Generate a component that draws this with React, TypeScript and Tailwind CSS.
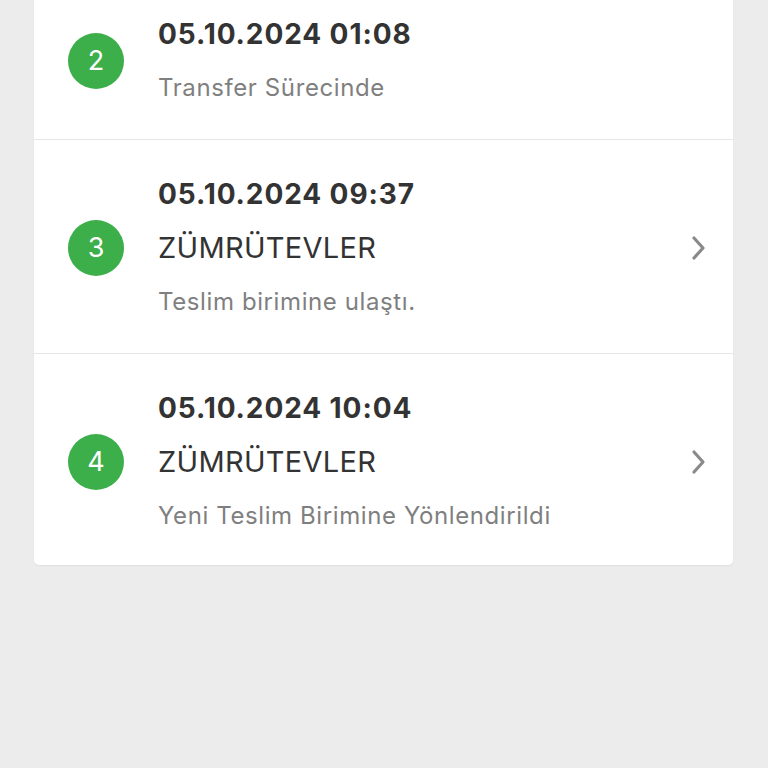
import React from "react";

type Item = { n: number; date: string; place?: string; status: string };

const items: Item[] = [
  { n: 2, date: "05.10.2024 01:08", status: "Transfer Sürecinde" },
  { n: 3, date: "05.10.2024 09:37", place: "ZÜMRÜTEVLER", status: "Teslim birimine ulaştı." },
  { n: 4, date: "05.10.2024 10:04", place: "ZÜMRÜTEVLER", status: "Yeni Teslim Birimine Yönlendirildi" },
];

function Chevron() {
  return (
    <svg width="18" height="26" viewBox="0 0 18 26" fill="none">
      <path d="M4 3 L13 13 L4 23" stroke="#8a8a8a" strokeWidth="3.2" strokeLinecap="round" strokeLinejoin="round" />
    </svg>
  );
}

export default function App() {
  return (
    <div className="min-h-[768px] w-full bg-[#ececec] overflow-hidden" style={{ fontFamily: "Inter, 'Noto Sans', sans-serif" }}>
      <div className="ml-[34px] mr-[35px] -mt-[20px] bg-white rounded-b-[5px] shadow-[0_1px_2px_rgba(0,0,0,0.06)]">
        {items.map((it, i) => (
          <div
            key={it.n}
            className={`flex items-center pl-[34px] pr-[25px] pt-[27px] ${i === items.length - 1 ? "pb-[22px]" : "pb-[24px]"} ${i > 0 ? "border-t border-[#e6e6e6]" : ""}`}
          >
            <div className="w-[56px] h-[56px] rounded-full bg-[#3cae4a] flex items-center justify-center text-white text-[27px] shrink-0">
              {it.n}
            </div>
            <div className="ml-[34px] flex-1 flex flex-col">
              <div className="h-[54px] flex items-center text-[28px] font-bold text-[#333333] tracking-[0.9px]">{it.date}</div>
              {it.place && (
                <div className="h-[54px] flex items-center text-[29px] text-[#333333] tracking-[0.3px]">{it.place}</div>
              )}
              <div className="h-[54px] flex items-center text-[24px] text-[#7f7f7f] tracking-[0.6px]">{it.status}</div>
            </div>
            {it.place && <Chevron />}
          </div>
        ))}
      </div>
    </div>
  );
}
